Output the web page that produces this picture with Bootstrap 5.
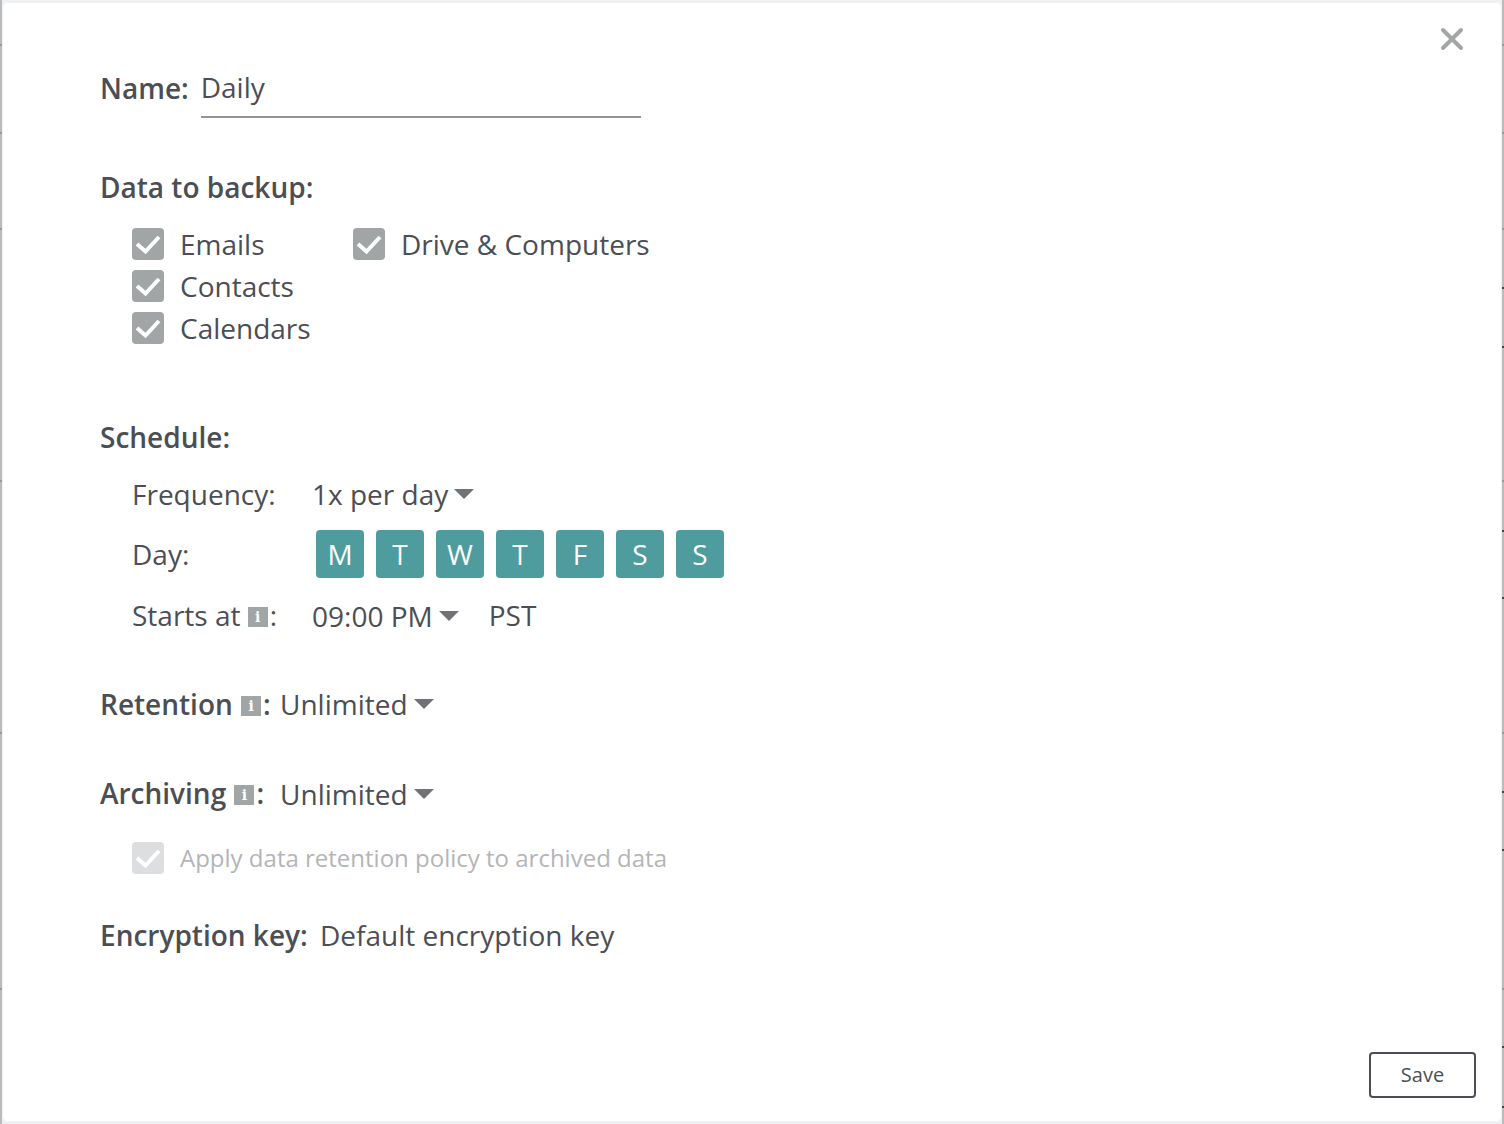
<!DOCTYPE html>
<html lang="en">
<head>
<meta charset="utf-8">
<title>Backup schedule</title>
<link href="https://cdn.jsdelivr.net/npm/bootstrap@5.3.0/dist/css/bootstrap.min.css" rel="stylesheet">
<style>
html,body{height:100%}
body{font-family:"Open Sans","Liberation Sans",sans-serif;font-size:28px;line-height:42px;color:#4b4e54;overflow:hidden;padding:2px;
background-color:#eef0f1;background-repeat:no-repeat;
background-image:
linear-gradient(#999,#999),linear-gradient(#999,#999),linear-gradient(#999,#999),linear-gradient(#999,#999),linear-gradient(#999,#999),linear-gradient(#999,#999),
linear-gradient(#999,#999),linear-gradient(#999,#999),linear-gradient(#999,#999),linear-gradient(#999,#999),linear-gradient(#999,#999),linear-gradient(#999,#999),
linear-gradient(#444,#444),linear-gradient(#444,#444),linear-gradient(#444,#444),linear-gradient(#444,#444),linear-gradient(#444,#444),linear-gradient(#444,#444),linear-gradient(#444,#444),linear-gradient(#444,#444),
linear-gradient(#babbbc,#babbbc),linear-gradient(#babbbc,#babbbc);
background-size:2px 2px,2px 2px,2px 2px,2px 2px,2px 2px,2px 2px,2px 2px,2px 2px,2px 2px,2px 2px,2px 2px,2px 2px,2px 2px,2px 2px,2px 2px,2px 2px,2px 2px,2px 2px,2px 2px,2px 2px,2px 100%,2px 100%;
background-position:
0 44px,0 132px,0 228px,0 480px,0 732px,0 988px,
right 44px,right 132px,right 228px,right 480px,right 732px,right 988px,
right 287px,right 346px,right 530px,right 597px,right 791px,right 849px,right 1046px,right 1106px,
left top,right top}
.sheet{position:relative;height:100%;background:#fff;border-radius:6px;box-shadow:inset 0 0 0 1px #f1f2f3;padding:58px 26px 24px 98px}
.shut{position:absolute;top:25px;right:38px;width:24px;height:24px;padding:0;border:0;background:none;line-height:0}
.name-row{height:58px}
.name-label{padding-bottom:2px}
.name-field{width:440px;height:58px;margin-left:12px;border-bottom:2px solid #929396;line-height:54px}
.strong-label{font-weight:600}
.sec-data{margin-top:48px}
.check-grid{margin-top:15px;margin-left:32px;width:560px}
.check-col-a{width:221px}
.tick{width:32px;height:32px;background:#a1a5a6;border-radius:4px;flex:none;margin-right:16px}
.tick svg{display:block}
.sec-sched{margin-top:67px}
.sched-row{margin-left:32px}
.lab{width:180px}
.gap-freq{margin-top:15px}
.gap-day{margin-top:15px}
.gap-start{margin-top:16px}
.days{gap:12px;margin-left:4px}
.day{width:48px;height:48px;background:#4f9c9f;color:#fff;border-radius:4px;text-align:center;line-height:48px}
.drop{display:inline-flex;align-items:center}
.drop-low{align-self:flex-start;margin-top:1px}
.caret{display:inline-block;width:0;height:0;margin-left:6px;margin-top:-1px;border-left:10px solid transparent;border-right:10px solid transparent;border-top:10px solid #707276}
.zone{margin-left:30px}
.info{display:inline-block;width:20px;height:20px;margin-right:2px;background:#a1a5a6;color:#fff;font-family:"DejaVu Serif",serif;font-size:14px;font-weight:700;line-height:20px;text-align:center;vertical-align:4px}
.info-b{margin-left:1px}
.sec-ret{margin-top:46px}
.sec-arch{margin-top:47px}
.gap-ret{margin-left:2px}
.gap-arch{margin-left:16px}
.arch-sub{margin-top:22px;margin-left:32px;font-size:24px;color:#b3b5b7}
.arch-sub .tick{background:#dcdedf}
.sec-enc{margin-top:35px}
.gap-enc{margin-left:5px}
.save{position:absolute;right:26px;bottom:24px;width:107px;height:46px;padding:0;font-size:20px;line-height:1;color:#4b4e54;background:#fff;border:2px solid #4b4e54;border-radius:4px}
</style>
</head>
<body>
<div class="sheet">
  <button class="shut" type="button" aria-label="Close">
    <svg width="24" height="24" viewBox="0 0 24 24"><path d="M3 3L21 21M21 3L3 21" stroke="#a3a5a6" stroke-width="4" stroke-linecap="round" fill="none"/></svg>
  </button>

  <div class="name-row d-flex align-items-center">
    <span class="strong-label name-label">Name:</span>
    <div class="name-field">Daily</div>
  </div>

  <div class="sec-data strong-label">Data to backup:</div>
  <div class="check-grid d-flex">
    <div class="check-col-a">
      <div class="d-flex align-items-center"><span class="tick"><svg width="32" height="32" viewBox="0 0 32 32"><path d="M5 16L13.500 23.500L27 9" stroke="#fff" stroke-width="4" fill="none"/></svg></span>Emails</div>
      <div class="d-flex align-items-center"><span class="tick"><svg width="32" height="32" viewBox="0 0 32 32"><path d="M5 16L13.500 23.500L27 9" stroke="#fff" stroke-width="4" fill="none"/></svg></span>Contacts</div>
      <div class="d-flex align-items-center"><span class="tick"><svg width="32" height="32" viewBox="0 0 32 32"><path d="M5 16L13.500 23.500L27 9" stroke="#fff" stroke-width="4" fill="none"/></svg></span>Calendars</div>
    </div>
    <div>
      <div class="d-flex align-items-center"><span class="tick"><svg width="32" height="32" viewBox="0 0 32 32"><path d="M5 16L13.500 23.500L27 9" stroke="#fff" stroke-width="4" fill="none"/></svg></span>Drive &amp; Computers</div>
    </div>
  </div>

  <div class="sec-sched strong-label">Schedule:</div>
  <div class="sched-row gap-freq d-flex"><span class="lab">Frequency:</span><span class="drop">1x per day<span class="caret"></span></span></div>
  <div class="sched-row gap-day d-flex align-items-center"><span class="lab">Day:</span>
    <div class="days d-flex"><span class="day">M</span><span class="day">T</span><span class="day">W</span><span class="day">T</span><span class="day">F</span><span class="day">S</span><span class="day">S</span></div>
  </div>
  <div class="sched-row gap-start d-flex"><span class="lab">Starts at <span class="info">i</span>:</span><span class="drop drop-low">09:00 PM<span class="caret"></span></span><span class="zone">PST</span></div>

  <div class="sec-ret"><span class="strong-label">Retention <span class="info info-b">i</span>:</span> <span class="drop gap-ret">Unlimited<span class="caret"></span></span></div>
  <div class="sec-arch d-flex"><span class="strong-label">Archiving <span class="info info-b">i</span>:</span> <span class="drop drop-low gap-arch">Unlimited<span class="caret"></span></span></div>
  <div class="arch-sub d-flex align-items-center"><span class="tick"><svg width="32" height="32" viewBox="0 0 32 32"><path d="M5 16L13.500 23.500L27 9" stroke="#fff" stroke-width="4" fill="none"/></svg></span>Apply data retention policy to archived data</div>
  <div class="sec-enc"><span class="strong-label">Encryption key:</span> <span class="gap-enc">Default encryption key</span></div>

  <button class="save" type="button">Save</button>
</div>
<script src="https://cdn.jsdelivr.net/npm/bootstrap@5.3.0/dist/js/bootstrap.bundle.min.js"></script>
</body>
</html>
